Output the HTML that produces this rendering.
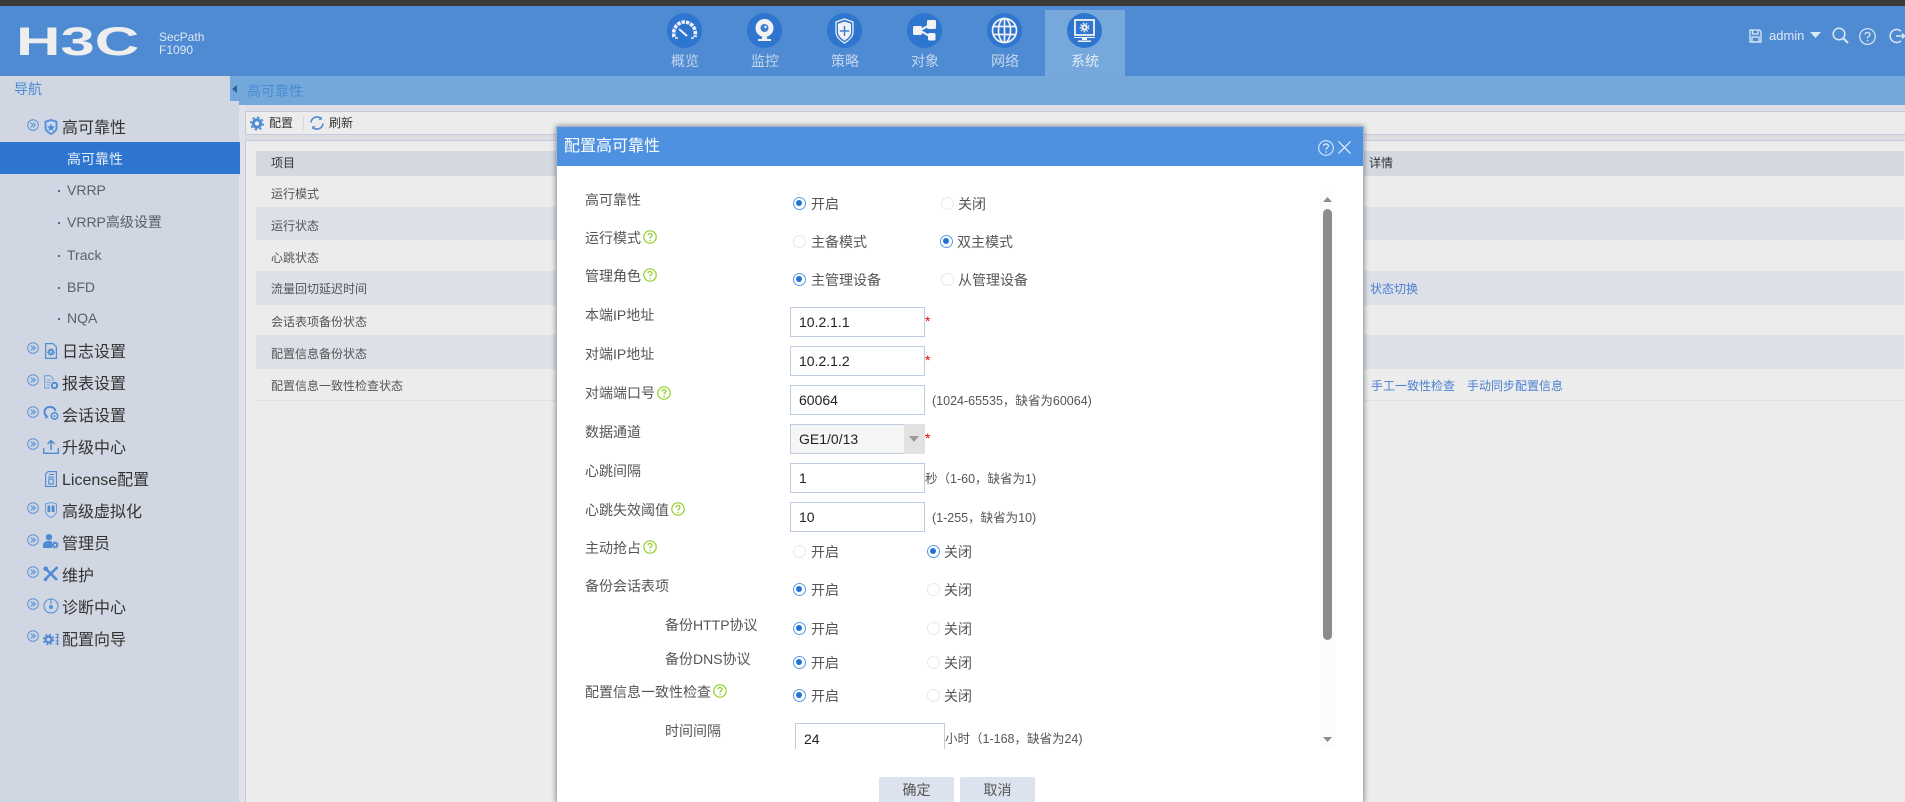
<!DOCTYPE html>
<html lang="zh"><head><meta charset="utf-8"><title>配置高可靠性</title>
<style>
html,body{margin:0;padding:0;width:1905px;height:802px;overflow:hidden;background:#ececec}
body{position:relative;font-family:"Liberation Sans","Noto Sans CJK SC",sans-serif;font-size:14px;color:#555}
div,span,svg{position:absolute;box-sizing:border-box}
.t{white-space:nowrap;line-height:20px;height:20px}
.s{font-size:12px}
.g{font-size:16px;color:#333;left:62px;line-height:24px;height:24px}
.sub{left:67px;color:#5a5f68}
.dot{left:58px;width:2px;height:2px;background:#4f6f99}
.nl{width:80px;text-align:center;top:51px;color:#c4d7ef;line-height:20px}
.c{width:35px;height:35px;border-radius:50%;background:#2d75cf;top:13px}
.r{width:13px;height:13px;border-radius:50%;border:1px solid #e6e8ec;background:#fff}
.r.o{border:1.5px solid #5b9ae6}
.r.o:after{content:"";position:absolute;left:2px;top:2px;width:6px;height:6px;border-radius:50%;background:#2272d8}
.i{left:790px;width:135px;height:30px;border:1px solid #bfcde3;background:#fff;color:#222;padding-left:8px;line-height:28px;font-size:14px}
.st{color:#e00;left:925px;font-size:14px;line-height:14px;height:14px}
.h{font-size:12.5px;color:#555}
.row{left:256px;width:1648px;border-bottom:1px solid #e0e0e0}
.lk{color:#4a7fd0;font-size:12px}
</style></head>
<body>
<svg width="0" height="0" style="left:0;top:0"><defs>
<symbol id="ex" viewBox="0 0 12 12"><circle cx="6" cy="6" r="5.3" fill="none" stroke="#5a93d8" stroke-width="1"/><path d="M3.6 3.6 6 6 3.6 8.4M6 3.6 8.4 6 6 8.4" fill="none" stroke="#5a93d8" stroke-width="1"/></symbol>
<symbol id="gh" viewBox="0 0 14 14"><circle cx="7" cy="7" r="6.2" fill="none" stroke="#8fd020" stroke-width="1.2"/><path d="M5 5.4C5 3 9 3 9 5.3 9 7 7 6.8 7 8.6" fill="none" stroke="#8fd020" stroke-width="1.2"/><rect x="6.4" y="9.8" width="1.3" height="1.4" fill="#8fd020"/></symbol>
</defs></svg>

<!-- top -->
<div style="left:0;top:0;width:1905px;height:6px;background:#3b3b3b"></div>
<div style="left:0;top:6px;width:1905px;height:70px;background:#4f8bd2"></div>
<div class="t" style="left:16px;top:20px;height:44px;line-height:44px;font-size:40px;font-weight:bold;color:#eee;transform-origin:0 50%;transform:scale(1.54,1)">H3C</div>
<div class="t" style="left:159px;top:27px;font-size:12px;color:#dfe9f6">SecPath</div>
<div class="t" style="left:159px;top:40px;font-size:12px;color:#dfe9f6">F1090</div>

<div style="left:1045px;top:10px;width:80px;height:66px;background:#76a8db"></div>
<div class="c" style="left:667px"></div><div class="c" style="left:747px"></div><div class="c" style="left:827px"></div><div class="c" style="left:907px"></div><div class="c" style="left:987px"></div><div class="c" style="left:1067px"></div>
<svg style="left:667px;top:13px" width="35" height="35" viewBox="0 0 35 35"><path d="M7 24C5 14 12 9 17.500 9S30 14 28 24" fill="none" stroke="#eef" stroke-width="3.600" stroke-dasharray="3.500 1"/><path d="M12 16 20 23" stroke="#eef" stroke-width="2"/><path d="M8 25H11M24 25H27" stroke="#eef" stroke-width="1.500"/></svg>
<svg style="left:747px;top:13px" width="35" height="35" viewBox="0 0 35 35"><circle cx="17.500" cy="15" r="9" fill="#f2f2f2"/><circle cx="17.500" cy="15" r="4" fill="#3b7fd4"/><circle cx="18.500" cy="14" r="1.200" fill="#fff"/><path d="M15 24V26H11V28H24V26H20V24Z" fill="#f2f2f2"/></svg>
<svg style="left:827px;top:13px" width="35" height="35" viewBox="0 0 35 35"><path d="M17.500 6 26 9V19C26 24 21 28 17.500 30 14 28 9 24 9 19V9Z" fill="none" stroke="#f2f2f2" stroke-width="1.300"/><path d="M17.500 8.500 24 10.800V19C24 23 20 26 17.500 27.700 15 26 11 23 11 19V10.800Z" fill="#f2f2f2"/><path d="M17.500 13V23M12.800 18H22.200" stroke="#3b7fd4" stroke-width="1.500"/></svg>
<svg style="left:907px;top:13px" width="35" height="35" viewBox="0 0 35 35"><path d="M13 17.500 24 11M13 17.500 24 24" stroke="#f2f2f2" stroke-width="2"/><rect x="6" y="13" width="9" height="9" rx="1.500" fill="#f2f2f2"/><rect x="20" y="7" width="9" height="9" rx="1.500" fill="#f2f2f2"/><rect x="21" y="20" width="7.500" height="7.500" rx="1.500" fill="#f2f2f2"/></svg>
<svg style="left:987px;top:13px" width="35" height="35" viewBox="0 0 35 35" fill="none" stroke="#f2f2f2" stroke-width="1.700"><circle cx="17.500" cy="17.500" r="12"/><ellipse cx="17.500" cy="17.500" rx="6" ry="12"/><path d="M6.500 13.500H28.500M6.500 21.500H28.500M17.500 5.500V29.500"/></svg>
<svg style="left:1067px;top:13px" width="35" height="35" viewBox="0 0 35 35"><rect x="8" y="7" width="19" height="15" fill="none" stroke="#f2f2f2" stroke-width="1.800"/><circle cx="17.500" cy="14.500" r="3.200" fill="#f2f2f2"/><circle cx="17.500" cy="14.500" r="4.200" fill="none" stroke="#f2f2f2" stroke-width="1.300" stroke-dasharray="1.500 1.500"/><circle cx="17.500" cy="14.500" r="1.200" fill="#3b7fd4"/><path d="M7 24H28V25H7ZM15 25H20V27H15ZM11 27.500H24V29H11Z" fill="#f2f2f2"/></svg>
<div class="t nl" style="left:645px">概览</div><div class="t nl" style="left:725px">监控</div><div class="t nl" style="left:805px">策略</div><div class="t nl" style="left:885px">对象</div><div class="t nl" style="left:965px">网络</div><div class="t nl" style="left:1045px;color:#e4ecf6">系统</div>

<svg style="left:1749px;top:29px" width="13" height="14" viewBox="0 0 13 14" fill="none" stroke="#dbe8f7" stroke-width="1.300"><path d="M1 1H10.500L12 2.500V13H1Z"/><path d="M3.500 1V5H9V1M3 8H10V13H3Z"/></svg>
<div class="t" style="left:1769px;top:26px;font-size:13px;color:#dbe8f7">admin</div>
<svg style="left:1810px;top:32px" width="11" height="6"><path d="M0 0H11L5.500 6Z" fill="#dbe8f7"/></svg>
<svg style="left:1832px;top:27px" width="17" height="17" fill="none" stroke="#dbe8f7" stroke-width="1.500"><circle cx="7" cy="7" r="5.800"/><path d="M11 11 16 16" stroke-width="2"/></svg>
<svg style="left:1859px;top:28px" width="17" height="17" fill="none" stroke="#dbe8f7" stroke-width="1.200"><circle cx="8.500" cy="8.500" r="7.800"/><path d="M6 6.500C6 3.800 11 3.800 11 6.500 11 8.300 8.500 8 8.500 10.300" stroke-width="1.300"/><rect x="7.900" y="11.800" width="1.300" height="1.500" fill="#dbe8f7" stroke="none"/></svg>
<svg style="left:1889px;top:28px" width="16" height="16" fill="none" stroke="#dbe8f7" stroke-width="1.500"><path d="M12 3.200A6.500 6.500 0 1 0 12 12.800"/><path d="M7 8H16M13 5.500 15.500 8 13 10.500"/></svg>

<!-- sidebar -->
<div style="left:0;top:76px;width:239px;height:726px;background:#d0d7e2"></div>
<div class="t" style="left:14px;top:79px;color:#4a8ad4">导航</div>
<div style="left:230px;top:76px;width:9px;height:25px;background:#74a8da"></div>
<svg style="left:232px;top:85px" width="5" height="8"><path d="M5 0V8L0 4Z" fill="#2d5f9e"/></svg>
<div style="left:239px;top:76px;width:6px;height:726px;background:#dfe2e8"></div>

<div style="left:0;top:142px;width:240px;height:32px;background:#2d75cf"></div>
<div class="t" style="left:67px;top:149px;color:#e8eef8">高可靠性</div>
<div class="t g" style="top:117px">高可靠性</div>
<div class="t sub" style="top:180px">VRRP</div><div class="dot" style="top:190px"></div>
<div class="t sub" style="top:212px">VRRP高级设置</div><div class="dot" style="top:222px"></div>
<div class="t sub" style="top:245px">Track</div><div class="dot" style="top:255px"></div>
<div class="t sub" style="top:277px">BFD</div><div class="dot" style="top:287px"></div>
<div class="t sub" style="top:308px">NQA</div><div class="dot" style="top:318px"></div>
<div class="t g" style="top:341px">日志设置</div>
<div class="t g" style="top:373px">报表设置</div>
<div class="t g" style="top:405px">会话设置</div>
<div class="t g" style="top:437px">升级中心</div>
<div class="t g" style="top:469px">License配置</div>
<div class="t g" style="top:501px">高级虚拟化</div>
<div class="t g" style="top:533px">管理员</div>
<div class="t g" style="top:565px">维护</div>
<div class="t g" style="top:597px">诊断中心</div>
<div class="t g" style="top:629px">配置向导</div>

<svg style="left:27px;top:119px" width="12" height="12"><use href="#ex"/></svg>
<svg style="left:27px;top:342px" width="12" height="12"><use href="#ex"/></svg>
<svg style="left:27px;top:374px" width="12" height="12"><use href="#ex"/></svg>
<svg style="left:27px;top:406px" width="12" height="12"><use href="#ex"/></svg>
<svg style="left:27px;top:438px" width="12" height="12"><use href="#ex"/></svg>
<svg style="left:27px;top:502px" width="12" height="12"><use href="#ex"/></svg>
<svg style="left:27px;top:534px" width="12" height="12"><use href="#ex"/></svg>
<svg style="left:27px;top:566px" width="12" height="12"><use href="#ex"/></svg>
<svg style="left:27px;top:598px" width="12" height="12"><use href="#ex"/></svg>
<svg style="left:27px;top:630px" width="12" height="12"><use href="#ex"/></svg>

<svg style="left:44px;top:119px" width="14" height="16" viewBox="0 0 14 16"><path d="M7 0 13.500 2V9C13.500 12 10 14.500 7 16 4 14.500 .5 12 .5 9V2Z" fill="#5a93d8"/><path d="M7 2 11.500 3.500V9C11.500 11 9 12.800 7 14 5 12.800 2.500 11 2.500 9V3.500Z" fill="#c9d8ec"/><path d="M7 4.500 8.200 7.300 11 7.500 8.800 9.300 9.600 12 7 10.500 4.400 12 5.200 9.300 3 7.500 5.800 7.300Z" fill="#4f8ad2"/></svg>
<svg style="left:45px;top:343px" width="12" height="16" viewBox="0 0 12 16"><path d="M.6.6H8L11.400 4V15.400H.6Z" fill="none" stroke="#4f8ad2" stroke-width="1.200"/><circle cx="6" cy="9" r="2" fill="none" stroke="#4f8ad2" stroke-width="1.800"/><circle cx="6" cy="9" r="3.400" fill="none" stroke="#4f8ad2" stroke-width="1" stroke-dasharray="1.200 1.200"/></svg>
<svg style="left:44px;top:375px" width="14" height="14" viewBox="0 0 14 14"><path d="M.6.6H6L9 3.500V6M6 13H.6V.6" fill="none" stroke="#7ba6dc" stroke-width="1.200"/><path d="M2.500 5H7M2.500 7.500H7M2.500 10H6" stroke="#7ba6dc"/><circle cx="10.500" cy="10.500" r="2.700" fill="none" stroke="#4f8ad2" stroke-width="2"/></svg>
<svg style="left:43px;top:406px" width="16" height="15" viewBox="0 0 16 15"><path d="M4 10.500C-.5 7 1.500 1 7 1 10 1 12 2.500 12.500 5" fill="none" stroke="#4f8ad2" stroke-width="2"/><path d="M2.500 9 2 13 5.500 11Z" fill="#4f8ad2"/><circle cx="11.500" cy="10" r="3.200" fill="none" stroke="#4f8ad2" stroke-width="1.500"/><circle cx="11.500" cy="10" r="1" fill="#4f8ad2"/></svg>
<svg style="left:43px;top:439px" width="16" height="15" viewBox="0 0 16 15" fill="none" stroke="#4f8ad2" stroke-width="1.300"><path d="M.7 9V14.300H15.300V9"/><path d="M8 11V2M4.500 5 8 1.500 11.500 5" stroke-width="1.500"/></svg>
<svg style="left:45px;top:471px" width="12" height="16" viewBox="0 0 12 16" fill="none" stroke="#4f8ad2" stroke-width="1.100"><path d="M3 .6H11.400V15.400H.6V3Z"/><path d="M4 3.500H9M3 6H9"/><rect x="3.800" y="8" width="4.400" height="5"/></svg>
<svg style="left:45px;top:502px" width="12" height="16" viewBox="0 0 12 16"><path d="M6 .5 11.500 2V9.500C11.500 12 8.500 14.500 6 15.500 3.500 14.500.5 12 .5 9.500V2Z" fill="none" stroke="#6c9cd8" stroke-width="1"/><path d="M2.500 3.500H5.300V10H2.500ZM6.700 3.500H9.500V10H6.700Z" fill="#4f8ad2"/></svg>
<svg style="left:43px;top:534px" width="16" height="15" viewBox="0 0 16 15"><circle cx="6" cy="3.200" r="3.200" fill="#4f8ad2"/><path d="M0 14V11C0 8 3 7 6 7 7.500 7 8.500 7.300 9 7.700V14Z" fill="#4f8ad2"/><circle cx="12" cy="11" r="2" fill="none" stroke="#4f8ad2" stroke-width="1.800"/><circle cx="12" cy="11" r="3.300" fill="none" stroke="#4f8ad2" stroke-width="1" stroke-dasharray="1.300 1.300"/></svg>
<svg style="left:43px;top:566px" width="16" height="16" viewBox="0 0 16 16" stroke="#4f8ad2" fill="none"><path d="M1.500 1.500 14 14" stroke-width="2.600"/><path d="M14.500 1 3 12.500" stroke-width="2.600"/><circle cx="2.500" cy="13.500" r="1.800" fill="#4f8ad2" stroke="none"/><circle cx="2.800" cy="2.800" r="2.300" fill="#4f8ad2" stroke="none"/></svg>
<svg style="left:43px;top:598px" width="16" height="16" viewBox="0 0 16 16" fill="none" stroke="#5a93d8"><circle cx="8" cy="8" r="7" stroke-width="1.100"/><path d="M8 1V6" stroke-width="1.200"/><circle cx="8" cy="9" r="2" fill="#5a93d8" stroke="none"/></svg>
<svg style="left:43px;top:633px" width="16" height="13" viewBox="0 0 16 13"><circle cx="5.500" cy="6.500" r="3" fill="none" stroke="#4f8ad2" stroke-width="2.400"/><circle cx="5.500" cy="6.500" r="5" fill="none" stroke="#4f8ad2" stroke-width="1.500" stroke-dasharray="2 2"/><path d="M12.500 1.500H16M12.500 4.500H16M12.500 8H16M12.500 11H16M14.500 1V12" stroke="#4f8ad2"/></svg>

<!-- main -->
<div style="left:239px;top:76px;width:1666px;height:29px;background:#74a8da"></div>
<div class="t" style="left:247px;top:81px;color:#4a8ad4">高可靠性</div>
<div style="left:245px;top:105px;width:1660px;height:6px;background:#dcdee4"></div>
<div style="left:245px;top:111px;width:1660px;height:24px;background:#ececec;border:1px solid #c5cbdd;border-right:0"></div>
<div style="left:245px;top:135px;width:1660px;height:6px;background:#dcdee4;border-bottom:1px solid #c5cbdd"></div>
<div style="left:245px;top:141px;width:1660px;height:661px;background:#ececec;border-left:1px solid #c5cbdd"></div>
<svg style="left:250px;top:116px" width="14" height="15" viewBox="0 0 14 15"><circle cx="7" cy="7.500" r="3.700" fill="none" stroke="#4f8ad2" stroke-width="3"/><circle cx="7" cy="7.500" r="6.200" fill="none" stroke="#4f8ad2" stroke-width="1.600" stroke-dasharray="2.400 2.450"/></svg>
<div class="t s" style="left:269px;top:113px;color:#333">配置</div>
<div style="left:303px;top:116px;width:1px;height:14px;background:#d5d8de"></div>
<svg style="left:310px;top:116px" width="14" height="14" viewBox="0 0 14 14" fill="none" stroke="#4f8ad2" stroke-width="1.600"><path d="M1 6.500A6 6 0 0 1 11 2.500"/><path d="M13 7.500A6 6 0 0 1 3 11.500"/><path d="M11.800.5V3.800H8.500ZM2.200 13.500V10.200H5.500Z" fill="#4f8ad2" stroke="none"/></svg>
<div class="t s" style="left:329px;top:113px;color:#333">刷新</div>

<div class="row" style="top:151px;height:25px;background:#d3d8e1;border:0"></div>
<div class="row" style="top:176px;height:32px;background:#ececec"></div>
<div class="row" style="top:208px;height:32px;background:#dde0e8"></div>
<div class="row" style="top:240px;height:32px;background:#ececec"></div>
<div class="row" style="top:272px;height:33px;background:#dde0e8"></div>
<div class="row" style="top:305px;height:31px;background:#ececec"></div>
<div class="row" style="top:336px;height:33px;background:#dde0e8"></div>
<div class="row" style="top:369px;height:32px;background:#ececec"></div>
<div class="t s" style="left:271px;top:153px;color:#333">项目</div>
<div class="t s" style="left:271px;top:184px">运行模式</div>
<div class="t s" style="left:271px;top:216px">运行状态</div>
<div class="t s" style="left:271px;top:248px">心跳状态</div>
<div class="t s" style="left:271px;top:279px">流量回切延迟时间</div>
<div class="t s" style="left:271px;top:312px">会话表项备份状态</div>
<div class="t s" style="left:271px;top:344px">配置信息备份状态</div>
<div class="t s" style="left:271px;top:376px">配置信息一致性检查状态</div>
<div class="t s" style="left:1369px;top:153px;color:#333">详情</div>
<div class="t lk" style="left:1370px;top:279px">状态切换</div>
<div class="t lk" style="left:1371px;top:376px">手工一致性检查</div>
<div class="t lk" style="left:1467px;top:376px">手动同步配置信息</div>

<!-- dialog -->
<div style="left:556px;top:126px;width:808px;height:676px;background:#fff;border:1px solid #a9b3c4;border-bottom:0;box-shadow:0 0 5px rgba(0,0,0,.45)"></div>
<div style="left:557px;top:127px;width:806px;height:39px;background:#4e91e0"></div>
<div class="t" style="left:564px;top:135px;height:24px;line-height:24px;font-size:16px;color:#fff">配置高可靠性</div>
<svg style="left:1318px;top:140px" width="16" height="16" fill="none" stroke="#dce9f9" stroke-width="1.100"><circle cx="8" cy="8" r="7.300"/><path d="M5.500 6C5.500 3.400 10.500 3.400 10.500 6 10.500 7.800 8 7.500 8 9.800" stroke-width="1.300"/><rect x="7.400" y="11.200" width="1.300" height="1.500" fill="#dce9f9" stroke="none"/></svg>
<svg style="left:1338px;top:141px" width="13" height="13" fill="none" stroke="#fff" stroke-width="1"><path d="M.5.500 12.500 12.500M12.500.5.500 12.500"/></svg>

<div class="t" style="left:585px;top:190px">高可靠性</div>
<div class="t" style="left:585px;top:228px">运行模式</div>
<div class="t" style="left:585px;top:266px">管理角色</div>
<div class="t" style="left:585px;top:305px">本端IP地址</div>
<div class="t" style="left:585px;top:344px">对端IP地址</div>
<div class="t" style="left:585px;top:383px">对端端口号</div>
<div class="t" style="left:585px;top:422px">数据通道</div>
<div class="t" style="left:585px;top:461px">心跳间隔</div>
<div class="t" style="left:585px;top:500px">心跳失效阈值</div>
<div class="t" style="left:585px;top:538px">主动抢占</div>
<div class="t" style="left:585px;top:576px">备份会话表项</div>
<div class="t" style="left:665px;top:615px">备份HTTP协议</div>
<div class="t" style="left:665px;top:649px">备份DNS协议</div>
<div class="t" style="left:585px;top:682px">配置信息一致性检查</div>
<div class="t" style="left:665px;top:721px">时间间隔</div>
<svg style="left:643px;top:230px" width="14" height="14"><use href="#gh"/></svg>
<svg style="left:643px;top:268px" width="14" height="14"><use href="#gh"/></svg>
<svg style="left:657px;top:386px" width="14" height="14"><use href="#gh"/></svg>
<svg style="left:671px;top:502px" width="14" height="14"><use href="#gh"/></svg>
<svg style="left:643px;top:540px" width="14" height="14"><use href="#gh"/></svg>
<svg style="left:713px;top:684px" width="14" height="14"><use href="#gh"/></svg>

<div class="r o" style="left:793px;top:197px"></div><div class="t" style="left:811px;top:194px">开启</div>
<div class="r" style="left:941px;top:197px"></div><div class="t" style="left:958px;top:194px">关闭</div>
<div class="r" style="left:793px;top:235px"></div><div class="t" style="left:811px;top:232px">主备模式</div>
<div class="r o" style="left:940px;top:235px"></div><div class="t" style="left:957px;top:232px">双主模式</div>
<div class="r o" style="left:793px;top:273px"></div><div class="t" style="left:811px;top:270px">主管理设备</div>
<div class="r" style="left:941px;top:273px"></div><div class="t" style="left:958px;top:270px">从管理设备</div>
<div class="r" style="left:793px;top:545px"></div><div class="t" style="left:811px;top:542px">开启</div>
<div class="r o" style="left:927px;top:545px"></div><div class="t" style="left:944px;top:542px">关闭</div>
<div class="r o" style="left:793px;top:583px"></div><div class="t" style="left:811px;top:580px">开启</div>
<div class="r" style="left:927px;top:583px"></div><div class="t" style="left:944px;top:580px">关闭</div>
<div class="r o" style="left:793px;top:622px"></div><div class="t" style="left:811px;top:619px">开启</div>
<div class="r" style="left:927px;top:622px"></div><div class="t" style="left:944px;top:619px">关闭</div>
<div class="r o" style="left:793px;top:656px"></div><div class="t" style="left:811px;top:653px">开启</div>
<div class="r" style="left:927px;top:656px"></div><div class="t" style="left:944px;top:653px">关闭</div>
<div class="r o" style="left:793px;top:689px"></div><div class="t" style="left:811px;top:686px">开启</div>
<div class="r" style="left:927px;top:689px"></div><div class="t" style="left:944px;top:686px">关闭</div>

<div class="i" style="top:307px">10.2.1.1</div><div class="st" style="top:314px">*</div>
<div class="i" style="top:346px">10.2.1.2</div><div class="st" style="top:353px">*</div>
<div class="i" style="top:385px">60064</div>
<div class="i" style="top:424px;width:115px;background:#f6f6f6">GE1/0/13</div>
<div style="left:904px;top:424px;width:21px;height:30px;background:#e2e2e2"></div>
<svg style="left:909px;top:436px" width="10" height="6"><path d="M0 0H10L5 6Z" fill="#999"/></svg>
<div class="st" style="top:431px">*</div>
<div class="i" style="top:463px">1</div>
<div class="i" style="top:502px">10</div>
<div style="left:795px;top:723px;width:150px;height:26px;border:1px solid #bfcde3;border-bottom:0;color:#222;padding-left:8px;line-height:30px;font-size:14px">24</div>
<div class="t h" style="left:932px;top:391px">(1024-65535，缺省为60064)</div>
<div class="t h" style="left:925px;top:469px">秒（1-60，缺省为1)</div>
<div class="t h" style="left:932px;top:508px">(1-255，缺省为10)</div>
<div class="t h" style="left:945px;top:729px">小时（1-168，缺省为24)</div>

<div style="left:1320px;top:191px;width:15px;height:557px;background:#fcfcfc"></div>
<div style="left:1323px;top:209px;width:9px;height:431px;background:#8c8c8c;border-radius:5px"></div>
<svg style="left:1323px;top:197px" width="9" height="5"><path d="M4.500 0 9 5H0Z" fill="#8c8c8c"/></svg>
<svg style="left:1323px;top:737px" width="9" height="5"><path d="M0 0H9L4.500 5Z" fill="#8c8c8c"/></svg>

<div class="t" style="left:879px;top:777px;width:75px;height:25px;line-height:26px;background:#dde3ee;text-align:center;border-radius:2px 2px 0 0">确定</div>
<div class="t" style="left:960px;top:777px;width:75px;height:25px;line-height:26px;background:#dde3ee;text-align:center;border-radius:2px 2px 0 0">取消</div>
</body></html>
